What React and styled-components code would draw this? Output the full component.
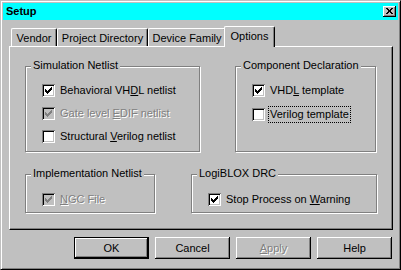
import React from 'react';
import styled, { createGlobalStyle } from 'styled-components';

const GlobalStyle = createGlobalStyle`
  html, body {
    margin: 0;
    padding: 0;
    background: #c0c0c0;
  }
  body {
    font-family: "Liberation Sans", Arial, sans-serif;
    font-size: 11px;
    color: #000;
  }
`;

const Window = styled.div`
  box-sizing: border-box;
  width: 401px;
  height: 270px;
  background: #c0c0c0;
  border: 1px solid;
  border-color: #c0c0c0 #000 #000 #c0c0c0;
  box-shadow: inset 1px 1px #fff, inset -1px -1px #808080;
  padding: 2px;
  display: flex;
  flex-direction: column;
`;

const TitleBar = styled.div`
  height: 17px;
  background: #00ffff;
  display: flex;
  align-items: center;
  justify-content: space-between;
  padding: 0 2px 0 3px;
`;

const Title = styled.span`
  font-weight: bold;
  font-size: 11px;
  line-height: 13px;
`;

const CloseButton = styled.div`
  box-sizing: border-box;
  width: 13px;
  height: 11px;
  background: #c0c0c0;
  box-shadow: inset -1px -1px #000, inset 1px 1px #fff, inset -2px -2px #808080;
  display: flex;
  align-items: center;
  justify-content: center;
  padding: 0 1px 1px 0;
`;

const Body = styled.div`
  padding: 6px 6px 0 6px;
  display: flex;
  flex-direction: column;
  align-items: flex-start;
`;

const TabStrip = styled.div`
  display: flex;
  align-items: flex-end;
  height: 20px;
  padding-left: 2px;
`;

const Tab = styled.div`
  box-sizing: border-box;
  width: ${(p) => p.$width}px;
  height: ${(p) => (p.$active ? 21 : 18)}px;
  margin: ${(p) => (p.$active ? '0 -2px -1px -2px' : '0')};
  position: relative;
  z-index: ${(p) => (p.$active ? 1 : 0)};
  background: #c0c0c0;
  border-top: 1px solid #fff;
  border-left: 1px solid #fff;
  border-right: 1px solid #000;
  border-radius: 2px 2px 0 0;
  box-shadow: inset -1px 0 #808080;
  text-align: center;
  line-height: 13px;
  padding-top: 3px;
  white-space: nowrap;
`;

const Panel = styled.div`
  box-sizing: border-box;
  width: 384px;
  height: 184px;
  border-top: 1px solid #fff;
  border-left: 1px solid #fff;
  border-right: 1px solid #000;
  border-bottom: 1px solid #000;
  box-shadow: inset -1px -1px #808080;
  padding: 19px 0 0 15px;
  display: flex;
  flex-direction: column;
  gap: 22px;
`;

const GroupRow = styled.div`
  display: flex;
  gap: ${(p) => p.$gap}px;
`;

const GroupBox = styled.div`
  box-sizing: border-box;
  position: relative;
  width: ${(p) => p.$width}px;
  height: ${(p) => p.$height}px;
  border: 1px solid #808080;
  box-shadow: inset 1px 1px #fff, 1px 1px #fff;
  padding: ${(p) => p.$pt}px 0 0 16px;
  display: flex;
  flex-direction: column;
  gap: ${(p) => p.$rowGap || 10}px;
`;

const GroupLabel = styled.span`
  position: absolute;
  top: -8px;
  left: 5px;
  padding: 0 2px;
  background: #c0c0c0;
  line-height: 13px;
  white-space: nowrap;
`;

const CheckRow = styled.div`
  display: flex;
  align-items: center;
  height: 13px;
`;

const Box = styled.span`
  box-sizing: border-box;
  flex: none;
  width: 13px;
  height: 13px;
  background: ${(p) => (p.$disabled ? '#c0c0c0' : '#fff')};
  color: ${(p) => (p.$disabled ? '#808080' : '#000')};
  box-shadow: inset 1px 1px #808080, inset -1px -1px #fff, inset 2px 2px #000,
    inset -2px -2px #c0c0c0;
  display: flex;
  align-items: center;
  justify-content: center;
`;

const CheckLabel = styled.span`
  margin-left: 3px;
  padding: 1px;
  line-height: 13px;
  white-space: nowrap;
  border: 1px dotted ${(p) => (p.$focused ? '#000' : 'transparent')};
  color: ${(p) => (p.$disabled ? '#808080' : '#000')};
  text-shadow: ${(p) => (p.$disabled ? '1px 1px 0 #fff' : 'none')};
`;

const ButtonRow = styled.div`
  align-self: stretch;
  display: flex;
  justify-content: flex-end;
  gap: 6px;
  margin-top: 7px;
`;

const Button = styled.button`
  box-sizing: border-box;
  width: 75px;
  height: 22px;
  padding: 0;
  background: #c0c0c0;
  font-family: "Liberation Sans", Arial, sans-serif;
  font-size: 11px;
  color: ${(p) => (p.disabled ? '#808080' : '#000')};
  text-shadow: ${(p) => (p.disabled ? '1px 1px 0 #fff' : 'none')};
  border: ${(p) => (p.$default ? '1px solid #000' : 'none')};
  box-shadow: inset -1px -1px #000, inset 1px 1px #fff, inset -2px -2px #808080;
`;

const checkSpans = [
  [6, 0, 1],
  [5, 1, 2],
  [0, 2, 1],
  [4, 2, 3],
  [0, 3, 2],
  [3, 3, 3],
  [0, 4, 5],
  [1, 5, 3],
  [2, 6, 1],
];

const CheckMark = () => (
  <svg width="7" height="7" viewBox="0 0 7 7" shapeRendering="crispEdges">
    {checkSpans.map(([x, y, w]) => (
      <rect key={`${x}-${y}`} x={x} y={y} width={w} height="1" fill="currentColor" />
    ))}
  </svg>
);

const closeSpans = [
  [0, 0, 2], [5, 0, 2],
  [1, 1, 2], [4, 1, 2],
  [2, 2, 3],
  [2, 3, 3],
  [1, 4, 2], [4, 4, 2],
  [0, 5, 2], [5, 5, 2],
];

const CloseGlyph = () => (
  <svg width="7" height="6" viewBox="0 0 7 6" shapeRendering="crispEdges">
    {closeSpans.map(([x, y, w]) => (
      <rect key={`${x}-${y}`} x={x} y={y} width={w} height="1" fill="#000" />
    ))}
  </svg>
);

function Check({ checked, disabled, focused, children }) {
  return (
    <CheckRow>
      <Box $disabled={disabled}>{checked && <CheckMark />}</Box>
      <CheckLabel $disabled={disabled} $focused={focused}>
        {children}
      </CheckLabel>
    </CheckRow>
  );
}

const tabs = [
  { label: 'Vendor', width: 46 },
  { label: 'Project Directory', width: 91 },
  { label: 'Device Family', width: 78 },
  { label: 'Options', width: 51, active: true },
];

export default function App() {
  return (
    <>
      <GlobalStyle />
      <Window>
        <TitleBar>
          <Title>Setup</Title>
          <CloseButton>
            <CloseGlyph />
          </CloseButton>
        </TitleBar>
        <Body>
          <TabStrip>
            {tabs.map((t) => (
              <Tab key={t.label} $width={t.width} $active={t.active}>
                {t.label}
              </Tab>
            ))}
          </TabStrip>
          <Panel>
            <GroupRow $gap={35}>
              <GroupBox $width={175} $height={86} $pt={17}>
                <GroupLabel>Simulation Netlist</GroupLabel>
                <Check checked>
                  Behavioral VH<u>D</u>L netlist
                </Check>
                <Check checked disabled>
                  Gate level <u>E</u>DIF netlist
                </Check>
                <Check>
                  Structural <u>V</u>erilog netlist
                </Check>
              </GroupBox>
              <GroupBox $width={141} $height={86} $pt={17} $rowGap={11}>
                <GroupLabel>Component Declaration</GroupLabel>
                <Check checked>
                  VHD<u>L</u> template
                </Check>
                <Check focused>Verilog template</Check>
              </GroupBox>
            </GroupRow>
            <GroupRow $gap={36}>
              <GroupBox $width={130} $height={39} $pt={18}>
                <GroupLabel>Implementation Netlist</GroupLabel>
                <Check checked disabled>
                  <u>N</u>GC File
                </Check>
              </GroupBox>
              <GroupBox $width={186} $height={39} $pt={18}>
                <GroupLabel>LogiBLOX DRC</GroupLabel>
                <Check checked>
                  Stop Process on <u>W</u>arning
                </Check>
              </GroupBox>
            </GroupRow>
          </Panel>
          <ButtonRow>
            <Button $default>OK</Button>
            <Button>Cancel</Button>
            <Button disabled>
              <u>A</u>pply
            </Button>
            <Button>Help</Button>
          </ButtonRow>
        </Body>
      </Window>
    </>
  );
}
